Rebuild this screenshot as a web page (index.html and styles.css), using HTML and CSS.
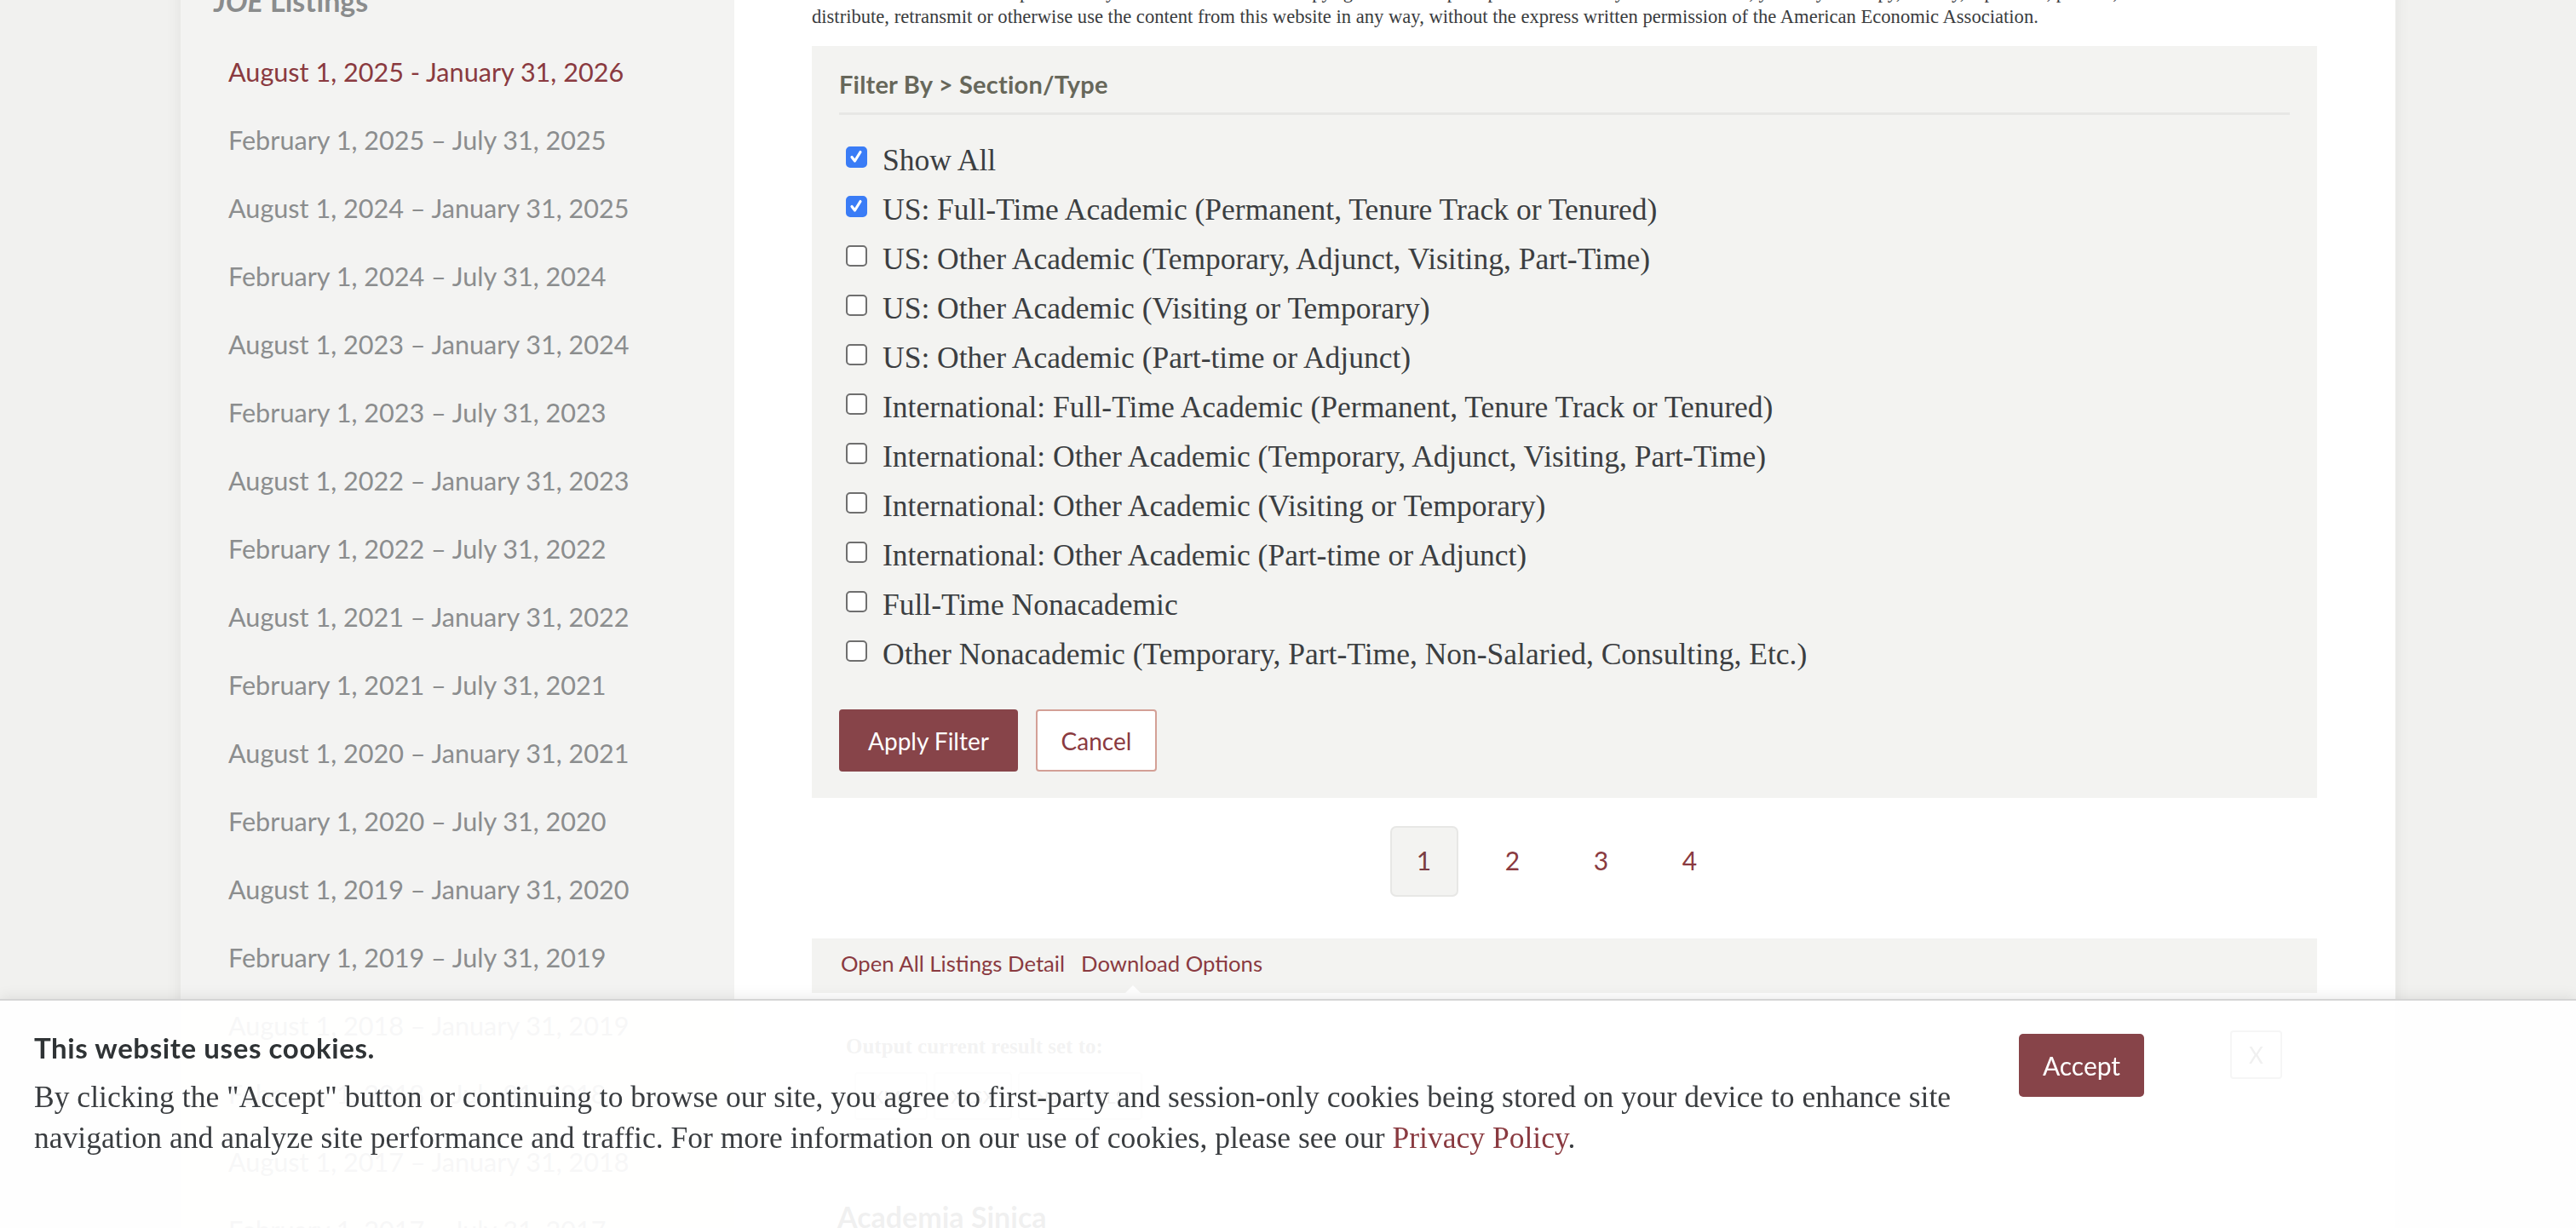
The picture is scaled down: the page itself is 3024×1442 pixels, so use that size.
FILE: index.html
```html
<!DOCTYPE html>
<html lang="en">
<head>
<meta charset="utf-8">
<title>JOE Listings</title>
<link rel="stylesheet" href="styles.css">
</head>
<body>
<div class="shell">
  <aside class="sidebar">
    <h2 class="side-title"><em>JOE</em> Listings</h2>
    <ul class="periods">
      <li class="current">August 1, 2025 - January 31, 2026</li>
      <li>February 1, 2025 – July 31, 2025</li>
      <li>August 1, 2024 – January 31, 2025</li>
      <li>February 1, 2024 – July 31, 2024</li>
      <li>August 1, 2023 – January 31, 2024</li>
      <li>February 1, 2023 – July 31, 2023</li>
      <li>August 1, 2022 – January 31, 2023</li>
      <li>February 1, 2022 – July 31, 2022</li>
      <li>August 1, 2021 – January 31, 2022</li>
      <li>February 1, 2021 – July 31, 2021</li>
      <li>August 1, 2020 – January 31, 2021</li>
      <li>February 1, 2020 – July 31, 2020</li>
      <li>August 1, 2019 – January 31, 2020</li>
      <li>February 1, 2019 – July 31, 2019</li>
      <li>August 1, 2018 – January 31, 2019</li>
      <li>February 1, 2018 – July 31, 2018</li>
      <li>August 1, 2017 – January 31, 2018</li>
      <li>February 1, 2017 – July 31, 2017</li>
    </ul>
  </aside>
  <main class="main">
    <p class="notice">Material on this website is protected by U.S. and international copyright law. Except as permitted under your terms of use, you may not copy, modify, reproduce, publish,<br>distribute, retransmit or otherwise use the content from this website in any way, without the express written permission of the American Economic Association.</p>

    <section class="filter">
      <h3 class="filter-title">Filter By &gt; Section/Type</h3>
      <ul class="options">
        <li class="option"><span class="cb on"><svg viewBox="0 0 25 25"><path d="M7 12.5 L10.5 17 L17 6.5"/></svg></span><span class="opt-label">Show All</span></li>
        <li class="option"><span class="cb on"><svg viewBox="0 0 25 25"><path d="M7 12.5 L10.5 17 L17 6.5"/></svg></span><span class="opt-label">US: Full-Time Academic (Permanent, Tenure Track or Tenured)</span></li>
        <li class="option"><span class="cb"></span><span class="opt-label">US: Other Academic (Temporary, Adjunct, Visiting, Part-Time)</span></li>
        <li class="option"><span class="cb"></span><span class="opt-label">US: Other Academic (Visiting or Temporary)</span></li>
        <li class="option"><span class="cb"></span><span class="opt-label">US: Other Academic (Part-time or Adjunct)</span></li>
        <li class="option"><span class="cb"></span><span class="opt-label">International: Full-Time Academic (Permanent, Tenure Track or Tenured)</span></li>
        <li class="option"><span class="cb"></span><span class="opt-label">International: Other Academic (Temporary, Adjunct, Visiting, Part-Time)</span></li>
        <li class="option"><span class="cb"></span><span class="opt-label">International: Other Academic (Visiting or Temporary)</span></li>
        <li class="option"><span class="cb"></span><span class="opt-label">International: Other Academic (Part-time or Adjunct)</span></li>
        <li class="option"><span class="cb"></span><span class="opt-label">Full-Time Nonacademic</span></li>
        <li class="option"><span class="cb"></span><span class="opt-label">Other Nonacademic (Temporary, Part-Time, Non-Salaried, Consulting, Etc.)</span></li>
      </ul>
      <div class="actions">
        <button class="btn btn-primary">Apply Filter</button>
        <button class="btn btn-outline">Cancel</button>
      </div>
    </section>

    <nav class="pager">
      <a class="page active">1</a>
      <a class="page">2</a>
      <a class="page">3</a>
      <a class="page">4</a>
    </nav>

    <div class="tools">
      <a class="tool-link">Open All Listings Detail</a>
      <a class="tool-link">Download Options</a>
      <span class="caret"></span>
    </div>
    <div class="download">
      <p class="download-label">Output current result set to:</p>
      <div class="formats">
        <span class="fmt">XML</span>
        <span class="fmt">XLSX</span>
        <span class="fmt">Native XLS</span>
      </div>
    </div>
    <h3 class="listing-title">Academia Sinica</h3>
  </main>
</div>

<div class="cookie">
  <div class="cookie-text">
    <h4 class="cookie-title">This website uses cookies.</h4>
    <p class="cookie-body">By clicking the "Accept" button or continuing to browse our site, you agree to first-party and session-only cookies being stored on your device to enhance site navigation and analyze site performance and traffic. For more information on our use of cookies, please see our <a class="cookie-link">Privacy Policy</a>.</p>
  </div>
  <button class="accept">Accept</button>
  <span class="cookie-close">X</span>
</div>
</body>
</html>
```

FILE: styles.css
```css
html, body {
  margin: 0;
  padding: 0;
  overflow: hidden;
}
body {
  background: #f1f1ef;
  font-family: Lato, "Open Sans", sans-serif;
  height: 1442px;
}
.shell {
  width: 2600px;
  margin: -24px auto 0;
  display: flex;
  min-height: 1600px;
  box-shadow: 0 0 18px rgba(0, 0, 0, 0.07);
}

/* Sidebar */
.sidebar {
  width: 650px;
  flex: none;
  background: #f3f3f2;
  padding: 5px 0 0 39px;
  box-sizing: border-box;
}
.side-title {
  margin: 0;
  font: 700 34px/40.8px Lato, sans-serif;
  color: #8a8c8d;
}
.side-title em {
  font-style: italic;
}
.periods {
  list-style: none;
  margin: 23.5px 0 0;
  padding: 0 0 0 17px;
}
.periods li {
  font-size: 30.6px;
  line-height: 80px;
  color: #8b8d8e;
  white-space: nowrap;
}
.periods li.current {
  color: #8a3a40;
}

/* Main */
.main {
  flex: 1;
  background: #fff;
  padding: 0 92px 0 91px;
}
.notice {
  margin: 0;
  font: 22.6px/29px "Liberation Serif", serif;
  color: #3a3c3e;
  white-space: nowrap;
}
.filter {
  background: #f3f3f1;
  margin-top: 20px;
  padding: 31px 32px;
}
.filter-title {
  margin: -1.5px 0 24px;
  font: 700 29px/30px Lato, sans-serif;
  letter-spacing: 0.2px;
  color: #67675a;
  padding-bottom: 18.5px;
  border-bottom: 3px solid #e7e7e5;
}
.options {
  list-style: none;
  margin: 0;
  padding: 0 0 0 8px;
}
.option {
  display: flex;
  align-items: flex-start;
  gap: 18px;
  height: 58px;
}
.cb {
  width: 25px;
  height: 25px;
  box-sizing: border-box;
  margin-top: 13px;
  border: 2px solid #6f6f6f;
  border-radius: 5px;
  background: #fff;
  flex: none;
  display: flex;
}
.cb.on {
  background: #3a7cf6;
  border-color: #3a7cf6;
}
.cb svg {
  margin: -2px;
  width: 25px;
  height: 25px;
}
.cb svg path {
  fill: none;
  stroke: #fff;
  stroke-width: 3.2;
  stroke-linecap: round;
  stroke-linejoin: round;
}
.opt-label {
  font: 35.5px/58px "Liberation Serif", serif;
  color: #3b3e41;
  white-space: nowrap;
}
.actions {
  display: flex;
  gap: 21px;
  margin-top: 36px;
}
.btn {
  height: 73px;
  box-sizing: border-box;
  font: 28px Lato, sans-serif;
  border-radius: 4px;
  padding: 0;
  cursor: pointer;
}
.btn-primary {
  width: 210px;
  background: #874449;
  color: #fff;
  border: none;
}
.btn-outline {
  width: 142px;
  background: #fff;
  color: #8a3a40;
  border: 2px solid #d3a096;
}

/* Pager */
.pager {
  display: flex;
  justify-content: center;
  gap: 24px;
  margin-top: 33px;
  padding-right: 18px;
}
.page {
  width: 80px;
  height: 83px;
  box-sizing: border-box;
  display: flex;
  align-items: center;
  justify-content: center;
  font-size: 30px;
  line-height: 1;
  padding-bottom: 4px;
  color: #8a3a40;
}
.page.active {
  background: #f3f3f1;
  border: 2px solid #e7e7e5;
  border-radius: 7px;
  color: #7a3d42;
}

/* Tools bar */
.tools {
  position: relative;
  background: #f3f3f1;
  margin-top: 49px;
  padding: 14px 34px 20px;
  display: flex;
  gap: 19px;
}
.tool-link {
  font: 25.7px/30px Lato, sans-serif;
  color: #8a3a40;
}
.caret {
  position: absolute;
  left: 368px;
  bottom: 0;
  width: 0;
  height: 0;
  border-left: 9px solid transparent;
  border-right: 9px solid transparent;
  border-bottom: 9px solid #fff;
}
.download {
  padding: 48px 0 30px 40px;
}
.download-label {
  margin: 0;
  font: 700 25px/30px "Liberation Serif", serif;
  color: #555;
}
.formats {
  display: flex;
  gap: 7px;
  margin: 15px 0 0 10px;
}
.fmt {
  height: 56px;
  box-sizing: border-box;
  border: 2px solid #ddd;
  border-radius: 4px;
  padding: 0 18px;
  display: flex;
  align-items: center;
  font: 22px Lato, sans-serif;
  color: #555;
}
.listing-title {
  margin: 64px 0 0 30px;
  font: 700 34px/40.8px Lato, sans-serif;
  color: #333;
}

/* Cookie banner */
.cookie {
  position: fixed;
  left: 0;
  right: 0;
  bottom: 0;
  height: 269px;
  box-sizing: border-box;
  background: rgba(255, 255, 255, 0.93);
  border-top: 2px solid #d4d4d4;
  box-shadow: 0 -4px 14px rgba(0, 0, 0, 0.07);
  display: flex;
  align-items: flex-start;
  padding: 39px 0 0 40px;
}
.cookie-text {
  width: 2300px;
  flex: none;
}
.cookie-title {
  margin: -0.6px 0 0;
  font: 700 33px/34.8px Lato, sans-serif;
  letter-spacing: 0.6px;
  color: #2f3335;
}
.cookie-body {
  margin: 15.6px 0 0;
  font: 35.55px/48px "Liberation Serif", serif;
  color: #3a3d40;
}
.cookie-link {
  color: #8a3a40;
}
.accept {
  margin-left: 30px;
  width: 147px;
  height: 74px;
  background: #874449;
  color: #fff;
  border: none;
  border-radius: 5px;
  font: 30px Lato, sans-serif;
  padding: 0;
  flex: none;
}
.cookie-close {
  margin: -4px 0 0 101px;
  width: 61px;
  height: 57px;
  box-sizing: border-box;
  border: 2px solid #f6f6f6;
  border-radius: 4px;
  display: flex;
  align-items: center;
  justify-content: center;
  font: 26px Lato, sans-serif;
  color: #f0f0f0;
}
```
